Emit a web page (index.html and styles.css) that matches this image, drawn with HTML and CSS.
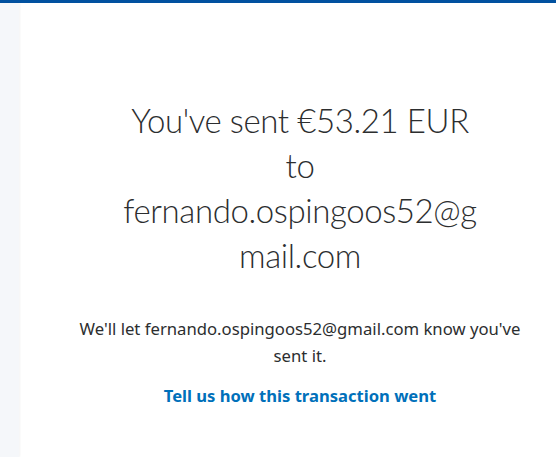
FILE: index.html
```html
<!DOCTYPE html>
<html lang="en">
<head>
  <meta charset="UTF-8" />
  <meta name="viewport" content="width=device-width, initial-scale=1.0"/>
  <title>Payment sent</title>
  <link rel="stylesheet" href="styles.css">
</head>
<body>
  <div class="page">
    <aside class="side"></aside>
    <main class="content">
      <div class="done">
        <h1 class="done-title">You've sent €53.21 EUR to fernando.ospingoos52@gmail.com</h1>
        <p class="done-note">We'll let fernando.ospingoos52@gmail.com know you've sent it.</p>
        <a href="#" class="done-link">Tell us how this transaction went</a>
      </div>
    </main>
  </div>
</body>
</html>
```

FILE: styles.css
```css
body {
  margin: 0;
  background-color: #fff;
  color: #2c2e2f;
  font-family: 'Noto Sans', sans-serif;
}
.page {
  display: flex;
  min-height: 100vh;
  border-top: 3px solid #0151a0;
  box-sizing: border-box;
}
.side {
  width: 19px;
  flex-shrink: 0;
  background-color: #f5f7fa;
  box-shadow: 1px 0 2px rgba(0,0,0,0.05);
}
.content {
  flex: 1;
}
.done {
  width: 460px;
  margin-left: 51px;
  padding-top: 95px;
  text-align: center;
}
.done-title {
  margin: 0 49px;
  font-family: 'Lato', sans-serif;
  font-weight: 300;
  font-size: 33px;
  letter-spacing: -0.4px;
  line-height: 45px;
  color: #2c2e2f;
  overflow-wrap: break-word;
}
.done-note {
  margin: 37px 0 0;
  font-size: 16.7px;
  line-height: 27px;
}
.done-link {
  display: inline-block;
  margin-top: 16px;
  font-weight: bold;
  font-size: 16.6px;
  line-height: 22px;
  color: #0070ba;
  text-decoration: none;
}
```
